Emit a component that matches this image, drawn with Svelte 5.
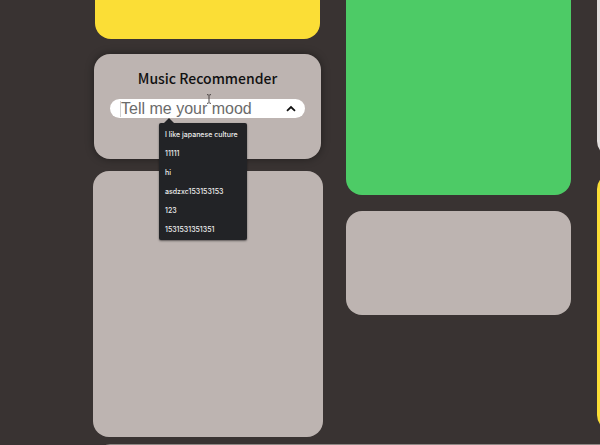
<script>
  let mood = $state('');
  const history = [
    'I like japanese culture',
    '11111',
    'hi',
    'asdzxc153153153',
    '123',
    '1531531351351',
  ];
</script>

<main>
  <div class="board">
    <div class="column">
      <section class="card yellow open-top first"></section>
      <section class="card recommender">
        <h1><label for="mood">Music Recommender</label></h1>
        <form class="field" onsubmit={(e) => e.preventDefault()}>
          <input id="mood" type="text" placeholder="Tell me your mood" autocomplete="off" bind:value={mood} />
          <button class="toggle" type="button" aria-label="Toggle options">
            <svg viewBox="0 0 12 8" width="12" height="8" aria-hidden="true">
              <path d="M2 5.8 L6 2 L10 5.8" fill="none" stroke="#111" stroke-width="1.8" />
            </svg>
          </button>
          <svg class="cursor" viewBox="0 0 6 10" width="6" height="10" aria-hidden="true">
            <path d="M1 .7H2.3L3 1.4L3.7 .7H5M3 1.4V8.6M1 9.3H2.3L3 8.6L3.7 9.3H5" fill="none" stroke="#3a3434" stroke-width=".9" />
          </svg>
          <ul class="history">
            {#each history as entry}
              <li><button type="button" onclick={() => (mood = entry)}>{entry}</button></li>
            {/each}
          </ul>
        </form>
      </section>
      <section class="card raised"></section>
    </div>
    <div class="column">
      <section class="card green open-top"></section>
      <section class="card short"></section>
    </div>
    <div class="column">
      <section class="card light open-top"></section>
      <section class="card yellow tall"></section>
    </div>
  </div>
  <footer></footer>
</main>

<style>
  :global(body) {
    margin: 0;
    background: #393332;
    overflow: hidden;
  }

  main {
    font-family: "Liberation Sans", Arial, sans-serif;
    overflow: hidden;
  }

  .board {
    display: grid;
    grid-template-columns: repeat(3, 37.5vw);
    column-gap: 26px;
    padding-left: 95px;
  }

  .column {
    display: flex;
    flex-direction: column;
    gap: 16px;
  }

  .card {
    box-sizing: border-box;
    border-radius: 16px;
    background: #bdb4b1;
  }

  .open-top {
    border-radius: 0 0 16px 16px;
  }

  .yellow {
    background: #fbde36;
  }

  .first {
    height: 39px;
  }

  .recommender {
    position: relative;
    z-index: 1;
    min-height: 105px;
    margin: -1px -1px 0;
    padding: 14px 16px;
    box-shadow: 0 0 8px rgba(0, 0, 0, 0.4);
  }

  h1 {
    margin: 0 0 11px;
    font: 500 14px/20px "Noto Sans CJK KR", sans-serif;
    color: #111;
    text-align: center;
  }

  .field {
    position: relative;
    display: flex;
    align-items: center;
    height: 19px;
    padding: 0 8px 0 10px;
    border-radius: 10px;
    background: #fff;
  }

  input {
    flex: 1;
    min-width: 0;
    height: 16px;
    padding: 0;
    border: 0;
    border-left: 1px solid #d0d0d0;
    outline: 0;
    background: none;
    font: 16px/16px "Liberation Sans", Arial, sans-serif;
    color: #333;
  }

  input::placeholder {
    color: #6b6b6b;
    opacity: 1;
  }

  .toggle {
    display: flex;
    padding: 0;
    border: 0;
    background: none;
  }

  .cursor {
    position: absolute;
    left: 96px;
    top: -5px;
  }

  .history {
    position: absolute;
    top: 24px;
    left: 49px;
    box-sizing: border-box;
    width: 88px;
    margin: 0;
    padding: 2px 0 1px;
    border-radius: 2px;
    background: #222326;
    box-shadow: 0 1px 2px rgba(0, 0, 0, 0.5);
    list-style: none;
  }

  .history::before {
    content: "";
    position: absolute;
    top: -5px;
    left: 5px;
    border: 5px solid transparent;
    border-top: 0;
    border-bottom-color: #222326;
  }

  .history button {
    display: block;
    width: 100%;
    padding: 0 6px;
    border: 0;
    background: none;
    font: 500 7px/19px Inter, sans-serif;
    color: #eee;
    text-align: left;
    white-space: nowrap;
  }

  .raised {
    height: 266px;
    margin: -4px -3px 0 -2px;
  }

  .green {
    height: 195px;
    background: #4dcb66;
  }

  .short {
    height: 104px;
  }

  .light {
    height: 157px;
    background: #e3dfde;
  }

  .tall {
    height: 258px;
  }

  footer {
    height: 20px;
    margin: 7px -16px 0 100px;
    border-radius: 16px;
    background: #8f8784;
  }
</style>
